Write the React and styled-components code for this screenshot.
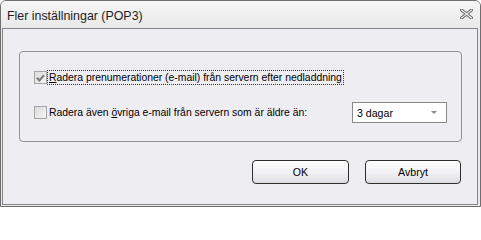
import React from 'react';
import styled, { createGlobalStyle } from 'styled-components';

const GlobalStyle = createGlobalStyle`
  html, body {
    margin: 0;
    padding: 0;
    background: #ffffff;
  }
  * {
    box-sizing: border-box;
  }
`;

const Frame = styled.div`
  width: 481px;
  height: 207px;
  display: flex;
  flex-direction: column;
  border: 1px solid #6e6e6e;
  border-radius: 6px 6px 0 0;
  padding: 0 2px 1px 1px;
  background: #eaeaea;
  font-family: "Liberation Sans", Arial, sans-serif;
  color: #000000;
`;

const TitleBar = styled.div`
  height: 27px;
  flex-shrink: 0;
  display: flex;
  align-items: center;
  justify-content: space-between;
  padding: 0 7px 0 6px;
  margin: 0 -2px 0 -1px;
  border-radius: 5px 5px 0 0;
  background: linear-gradient(#f6f6f6, #e9e9e9);
`;

const TitleText = styled.span`
  font-size: 12.4px;
  color: #1e1e1e;
  padding-top: 2px;
`;

const CloseGlyph = styled.svg`
  width: 13px;
  height: 10px;
  margin-top: -1px;
  display: block;
`;

const Client = styled.div`
  flex: 1;
  display: flex;
  flex-direction: column;
  border: 1px solid #858585;
  background: #eeedf2;
  padding: 22px 15px 0 16px;
`;

const GroupBox = styled.div`
  height: 91px;
  display: flex;
  flex-direction: column;
  gap: 17px;
  border: 1px solid #939393;
  border-radius: 4px;
  padding: 18px 14px 0 14px;
`;

const Row = styled.div`
  display: flex;
  align-items: center;
  justify-content: space-between;
  height: ${p => p.$h}px;
`;

const CheckLine = styled.label`
  display: flex;
  align-items: center;
  font-size: 10.4px;
`;

const Box = styled.span`
  width: 13px;
  height: 13px;
  flex-shrink: 0;
  display: flex;
  align-items: center;
  justify-content: center;
  border: 1px solid #a4a4a4;
  background: linear-gradient(135deg, #dcdcdc, #f4f4f4);
`;

const Label = styled.span`
  border: 1px dotted ${p => (p.$focus ? '#333333' : 'transparent')};
  padding: 0 1px;
  line-height: 13px;
  white-space: nowrap;
`;

const Select = styled.div`
  width: 95px;
  height: 21px;
  display: flex;
  align-items: center;
  justify-content: space-between;
  border: 1px solid #8a8a8a;
  background: #ffffff;
  padding: 0 9px 0 4px;
  font-size: 10.6px;
`;

const Arrow = styled.span`
  width: 0;
  height: 0;
  border-left: 3px solid transparent;
  border-right: 3px solid transparent;
  border-top: 3px solid #8c8c8c;
  margin-top: -1px;
`;

const ButtonRow = styled.div`
  display: flex;
  justify-content: flex-end;
  gap: 16px;
  margin-top: 18px;
  padding-right: 1px;
`;

const Button = styled.button`
  width: ${p => p.$w}px;
  height: 24px;
  border: 1px solid #2e2e2e;
  border-radius: 4px;
  background: linear-gradient(#fdfdfd 0%, #f1f1f4 55%, #dcdce4 100%);
  font-family: "Liberation Sans", Arial, sans-serif;
  font-size: 10.6px;
  color: #000000;
  padding: 0;
`;

const Check = () => (
  <svg width="9" height="8" viewBox="0 0 9 8">
    <path d="M1 3.8 L3.4 6.4 L8 1.2" fill="none" stroke="#7c7c7c" strokeWidth="2.2" />
  </svg>
);

export default function App() {
  return (
    <>
      <GlobalStyle />
      <Frame>
        <TitleBar>
          <TitleText>Fler inställningar (POP3)</TitleText>
          <CloseGlyph viewBox="0 0 13 10">
            <path d="M1.5 1 L11.5 9 M11.5 1 L1.5 9" stroke="#6a6a6a" strokeWidth="3.2" strokeLinecap="square" />
            <path d="M1.5 1 L11.5 9 M11.5 1 L1.5 9" stroke="#f2f2f2" strokeWidth="1.2" strokeLinecap="square" />
          </CloseGlyph>
        </TitleBar>
        <Client>
          <GroupBox>
            <Row $h={15}>
              <CheckLine>
                <Box><Check /></Box>
                <Label $focus><u>R</u>adera prenumerationer (e-mail) från servern efter nedladdning</Label>
              </CheckLine>
            </Row>
            <Row $h={21}>
              <CheckLine>
                <Box />
                <Label>Radera även <u>ö</u>vriga e-mail från servern som är äldre än:</Label>
              </CheckLine>
              <Select>
                <span>3 dagar</span>
                <Arrow />
              </Select>
            </Row>
          </GroupBox>
          <ButtonRow>
            <Button $w={97}>OK</Button>
            <Button $w={96}>Avbryt</Button>
          </ButtonRow>
        </Client>
      </Frame>
    </>
  );
}
